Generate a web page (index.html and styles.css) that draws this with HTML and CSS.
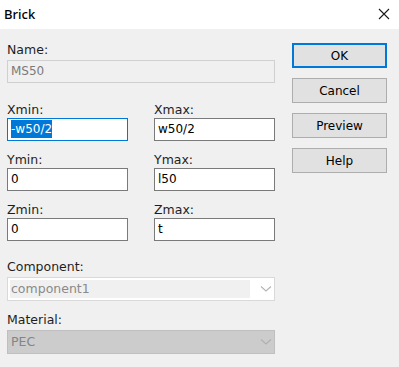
FILE: index.html
```html
<!DOCTYPE html>
<html lang="en">
  <head>
    <meta charset="UTF-8" />
    <title>Brick</title>
    <link rel="stylesheet" href="styles.css">
  </head>
  <body>
    <div class="dialog">
      <div class="titlebar">
        <span class="title">Brick</span>
        <svg class="close" width="12" height="12" viewBox="0 0 12 12">
          <path d="M1 1 L11 11 M11 1 L1 11" stroke="#1a1a1a" stroke-width="1.1" />
        </svg>
      </div>
      <div class="body">
        <div class="form">
          <label class="label">Name:</label>
          <div class="input disabled wide">MS50</div>

          <div class="pair first">
            <div class="field">
              <label class="label">Xmin:</label>
              <div class="input focused"><span class="sel">-w50/2</span></div>
            </div>
            <div class="field">
              <label class="label">Xmax:</label>
              <div class="input">w50/2</div>
            </div>
          </div>
          <div class="pair">
            <div class="field">
              <label class="label">Ymin:</label>
              <div class="input">0</div>
            </div>
            <div class="field">
              <label class="label">Ymax:</label>
              <div class="input">l50</div>
            </div>
          </div>
          <div class="pair">
            <div class="field">
              <label class="label">Zmin:</label>
              <div class="input">0</div>
            </div>
            <div class="field">
              <label class="label">Zmax:</label>
              <div class="input">t</div>
            </div>
          </div>

          <label class="label comp-label">Component:</label>
          <div class="combo">
            <div class="combo-text">component1</div>
            <svg class="chev" width="12" height="8" viewBox="0 0 12 8">
              <path d="M1 1.5 L6 6 L11 1.5" fill="none" stroke="#b4b4b4" stroke-width="1.1" />
            </svg>
          </div>

          <label class="label mat-label">Material:</label>
          <div class="combo dark">
            <div class="combo-text">PEC</div>
            <svg class="chev" width="12" height="8" viewBox="0 0 12 8">
              <path d="M1 1.5 L6 6 L11 1.5" fill="none" stroke="#b0b0b0" stroke-width="1.1" />
            </svg>
          </div>
        </div>
        <div class="buttons">
          <button class="btn default">OK</button>
          <button class="btn">Cancel</button>
          <button class="btn">Preview</button>
          <button class="btn">Help</button>
        </div>
      </div>
    </div>
  </body>
</html>
```

FILE: styles.css
```css
* {
  margin: 0;
  padding: 0;
  box-sizing: border-box;
}

body {
  width: 399px;
  height: 367px;
  overflow: hidden;
  background: #f0f0f0;
  font-family: Tahoma, "DejaVu Sans", sans-serif;
  font-size: 12px;
  color: #000;
}

.dialog {
  width: 399px;
  height: 367px;
  display: flex;
  flex-direction: column;
}

.titlebar {
  height: 29px;
  background: #fff;
  display: flex;
  align-items: center;
  justify-content: space-between;
  padding: 0 9px 2px 4px;
  flex-shrink: 0;
}
.title {
  font-family: "Noto Sans", sans-serif;
  font-size: 13px;
  font-weight: 500;
  color: #000;
}

.body {
  display: flex;
  padding: 14px 0 0 7px;
}

.form {
  width: 268px;
  display: flex;
  flex-direction: column;
}

.label {
  display: block;
  height: 17px;
  line-height: 13px;
  font-size: 12.5px;
  color: #1e1e1e;
}

.input {
  height: 23px;
  background: #fff;
  border: 1px solid #7a7a7a;
  padding: 0 0 0 3px;
  line-height: 21px;
  font-size: 12px;
  white-space: nowrap;
  overflow: hidden;
}
.input.wide {
  width: 268px;
}
.input.disabled {
  background: #f0f0f0;
  border-color: #d0d0d0;
  color: #7a7a7a;
}
.input.focused {
  border-color: #0078d7;
}
.sel {
  background: #0078d7;
  color: #fff;
  padding: 2px 0;
}

.pair {
  display: flex;
  gap: 26px;
  margin-top: 12px;
}
.pair.first {
  margin-top: 20px;
}
.field {
  width: 121px;
}
.field .label {
  height: 15px;
}

.comp-label {
  margin-top: 19px;
}
.mat-label {
  margin-top: 12px;
}

.combo {
  height: 24px;
  border: 1px solid #d9d9d9;
  background: #fff;
  display: flex;
  align-items: center;
  padding: 2px;
  font-size: 12.5px;
}
.combo-text {
  width: 241px;
  height: 18px;
  line-height: 18px;
  background: #f0f0f0;
  color: #8a8a8a;
  padding-left: 1px;
}
.chev {
  margin-left: 10px;
}
.combo.dark {
  background: #cccccc;
  border-color: #bfbfbf;
}
.combo.dark .combo-text {
  background: transparent;
  color: #858585;
}

.buttons {
  margin-left: 17px;
  display: flex;
  flex-direction: column;
  gap: 10px;
}
.btn {
  width: 95px;
  height: 25px;
  background: #e1e1e1;
  border: 1px solid #adadad;
  font-family: Tahoma, "DejaVu Sans", sans-serif;
  font-size: 12px;
  color: #000;
}
.btn.default {
  border: 2px solid #0078d7;
}
```
